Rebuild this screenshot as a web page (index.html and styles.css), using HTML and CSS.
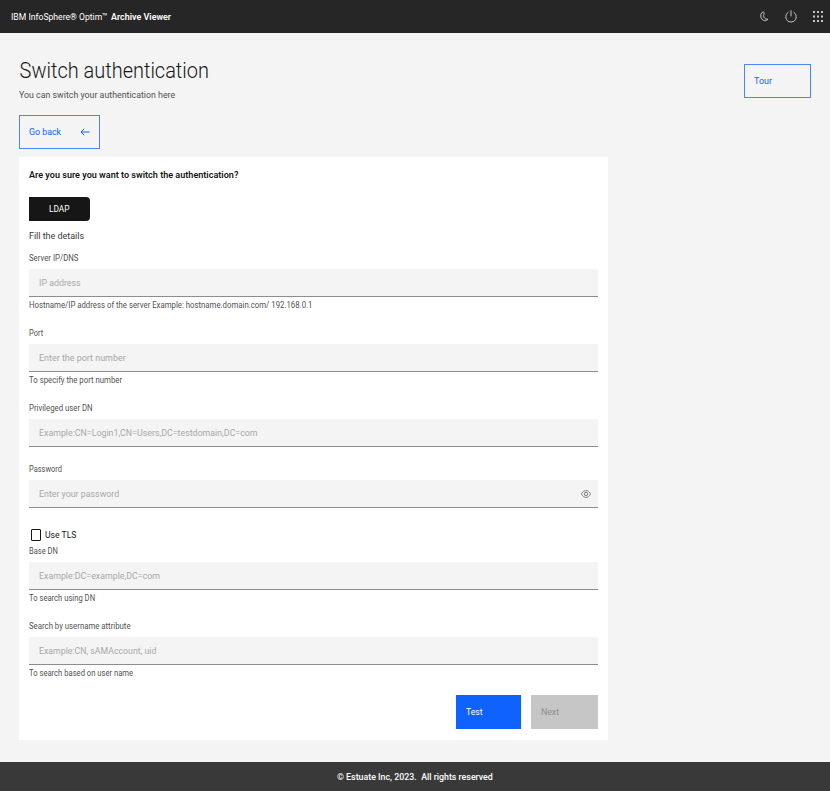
FILE: index.html
```html
<!DOCTYPE html>
<html lang="en">
<head>
<meta charset="utf-8">
<title>Switch authentication</title>
<link rel="stylesheet" href="styles.css">
</head>
<body>
<header class="topbar">
  <div class="brand"><span class="brand-name sq88">IBM InfoSphere® Optim™</span><b class="sq91">Archive Viewer</b></div>
  <nav class="tools">
    <svg width="9" height="11" viewBox="0 0 9 11"><path d="M3.2 .8C.9 1.6 .2 4.4 1.2 6.9 2.3 9.8 5.9 10.8 8 8.1 5 8.7 2.9 5.9 3.9 3.5 4.3 2.3 4 1 3.2 .8Z"/></svg>
    <svg width="12" height="13" viewBox="0 0 12 13"><path d="M3.4 2.2C-.8 4.6 .2 12 6 12S12.8 4.6 8.6 2.2M6 .3V6.4"/></svg>
    <svg class="dots" width="10" height="11" viewBox="0 0 10 11"><path d="M0 0h2v2H0zM4 0h2v2H4zM8 0h2v2H8zM0 4.5h2v2H0zM4 4.5h2v2H4zM8 4.5h2v2H8zM0 9h2v2H0zM4 9h2v2H4zM8 9h2v2H8z"/></svg>
  </nav>
</header>
<main>
  <div class="heading">
    <div>
      <h1 class="sq89">Switch authentication</h1>
      <p class="sub sq90">You can switch your authentication here</p>
    </div>
    <button class="btn outline tour"><span class="sq91">Tour</span></button>
  </div>
  <button class="btn outline back"><span class="sq90">Go back</span>
    <svg width="10" height="8" viewBox="0 0 10 8"><path d="M9.5 4H1M4.2 .8 1 4l3.2 3.2"/></svg>
  </button>
  <section class="card">
    <h2 class="sq92">Are you sure you want to switch the authentication?</h2>
    <button class="chip"><span class="sq85">LDAP</span></button>
    <p class="fill sq91">Fill the details</p>
    <div class="field">
      <label class="sq93" for="ip">Server IP/DNS</label>
      <div class="control"><input id="ip" class="sq90" placeholder="IP address"></div>
      <p class="helper sq93">Hostname/IP address of the server Example: hostname.domain.com/ 192.168.0.1</p>
    </div>
    <div class="field">
      <label class="sq89" for="port">Port</label>
      <div class="control"><input id="port" class="sq91" placeholder="Enter the port number"></div>
      <p class="helper sq93">To specify the port number</p>
    </div>
    <div class="field">
      <label class="sq93" for="dn">Privileged user DN</label>
      <div class="control"><input id="dn" class="sq90" placeholder="Example:CN=Login1,CN=Users,DC=testdomain,DC=com"></div>
    </div>
    <div class="field">
      <label class="sq89" for="pw">Password</label>
      <div class="control"><input id="pw" type="password" class="sq90" placeholder="Enter your password">
        <svg class="eye" width="10" height="8" viewBox="0 0 10 8"><path d="M.5 4C2.3-.5 7.7-.5 9.5 4 7.7 8.5 2.3 8.5 .5 4Z"/><circle cx="5" cy="4" r="1.7"/></svg>
      </div>
    </div>
    <label class="check"><input type="checkbox"><span class="sq88">Use TLS</span></label>
    <div class="field">
      <label class="sq90" for="base">Base DN</label>
      <div class="control"><input id="base" class="sq90" placeholder="Example:DC=example,DC=com"></div>
      <p class="helper sq91">To search using DN</p>
    </div>
    <div class="field">
      <label class="sq93" for="attr">Search by username attribute</label>
      <div class="control"><input id="attr" class="sq89" placeholder="Example:CN, sAMAccount, uid"></div>
      <p class="helper sq91">To search based on user name</p>
    </div>
    <div class="actions">
      <button class="btn primary"><span class="sq88">Test</span></button>
      <button class="btn disabled" disabled><span class="sq89">Next</span></button>
    </div>
  </section>
</main>
<footer><span class="sq90">© Estuate Inc, 2023.&nbsp; All rights reserved</span></footer>
</body>
</html>
```
FILE: styles.css
```css
* { box-sizing: border-box; }
body { margin: 0; height: 791px; display: flex; flex-direction: column; overflow: hidden; background: #f4f4f4; color: #161616; font: 9.8px/14px Roboto, "Liberation Sans", sans-serif; }
h1, h2, p { margin: 0; }
button, input { font: inherit; }
svg { fill: none; stroke: #c6c6c6; stroke-width: 1; flex: none; }

/* Condensed lettering */
[class*="sq"] { display: block; width: max-content; transform-origin: 0 50%; white-space: nowrap; }
.sq85 { transform: scaleX(.85); }
.sq88 { transform: scaleX(.88); }
.sq89 { transform: scaleX(.892); }
.sq90 { transform: scaleX(.9); }
.sq91 { transform: scaleX(.912); }
.sq92 { transform: scaleX(.925); }
.sq93 { transform: scaleX(.93); }

.topbar { height: 33px; flex: none; display: flex; align-items: center; justify-content: space-between; padding: 0 7px 0 11px; background: #262626; color: #fff; }
.brand { display: flex; }
.brand b { font-weight: 600; }
.brand-name { margin-right: -10px; }
.tools { display: flex; align-items: center; gap: 16px; }
.dots { fill: #c6c6c6; stroke: none; }

main { flex: 1; padding: 24px 19px 0; }
.heading { display: flex; justify-content: space-between; height: 58px; }
h1 { padding-left: .7px; font-size: 22.4px; line-height: 26px; font-weight: 300; }
.sub { margin-top: 5px; color: #525252; }

.btn { display: flex; align-items: center; height: 34px; padding: 0 9px; border: 1px solid transparent; border-radius: 0; }
.outline { background: transparent; border-color: #4a86fb; color: #0f62fe; }
.outline svg { stroke: #0f62fe; }
.tour { width: 67px; margin: 7px 0 0; }
.back { width: 81px; justify-content: space-between; }

.card { width: 589px; height: 583px; margin-top: 8px; padding: 11px 10px 0; background: #fff; }
h2 { font-size: 9.8px; line-height: 14px; font-weight: 600; }
.chip { display: block; width: 61px; height: 24px; margin: 15px 0 8px; padding: 0 0 0 20px; border: 0; border-radius: 0 4px 4px 0; background: #161616; color: #fff; }
.fill { margin-bottom: 9px; color: #393939; }
.field { margin-bottom: 16px; }
.field label { height: 12px; margin-bottom: 5px; font-size: 8.4px; line-height: 12px; color: #525252; }
.control { display: flex; align-items: center; height: 28px; padding: 0 7px 0 10px; background: #f4f4f4; border-bottom: 1px solid #8d8d8d; }
.control input { width: 480px; height: 14px; padding: 0; border: 0; outline: 0; background: transparent; line-height: 14px; }
.control input::placeholder { color: #a8a8a8; opacity: 1; }
.eye { margin-left: auto; stroke: #6f6f6f; stroke-width: .9; }
.helper { margin-top: 3px; font-size: 8.4px; line-height: 11px; color: #525252; }
.check { display: flex; align-items: center; height: 21px; padding-left: 2px; }
.check input { appearance: none; width: 10px; height: 12px; margin: 0 4px 0 0; border: 1px solid #161616; border-radius: 1px; }
.actions { display: flex; justify-content: flex-end; gap: 10px; }
.primary { width: 65px; background: #0f62fe; color: #fff; }
.disabled { width: 67px; background: #c6c6c6; color: #8d8d8d; }

footer { height: 29px; flex: none; display: flex; align-items: center; padding-left: 337px; background: #393939; color: #fff; font-weight: 500; }
```
